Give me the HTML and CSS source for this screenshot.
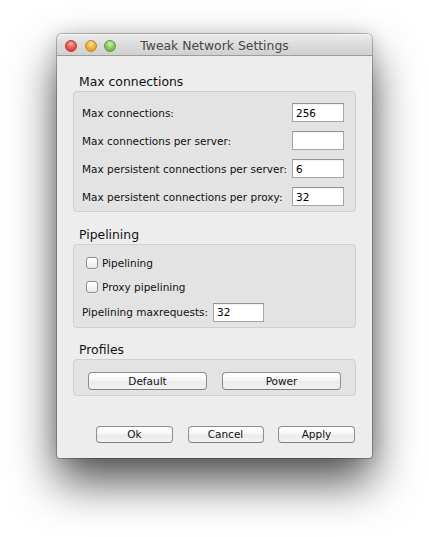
FILE: index.html
```html
<!DOCTYPE html>
<html>
<head>
<meta charset="utf-8">
<title>Tweak Network Settings</title>
<link rel="stylesheet" href="styles.css">
</head>
<body>
<div class="window">
  <div class="titlebar">
    <div class="lights">
      <span class="light red"></span>
      <span class="light yellow"></span>
      <span class="light green"></span>
    </div>
    <div class="title">Tweak Network Settings</div>
    <div class="spacer"></div>
  </div>
  <div class="content">
    <section class="section">
      <h2 class="heading">Max connections</h2>
      <div class="group form-grid">
        <span class="label">Max connections:</span>
        <input class="field" type="text" value="256">
        <span class="label">Max connections per server:</span>
        <input class="field" type="text" value="">
        <span class="label">Max persistent connections per server:</span>
        <input class="field" type="text" value="6">
        <span class="label">Max persistent connections per proxy:</span>
        <input class="field" type="text" value="32">
      </div>
    </section>
    <section class="section">
      <h2 class="heading">Pipelining</h2>
      <div class="group stack">
        <label class="check-row"><input class="checkbox" type="checkbox"><span class="label">Pipelining</span></label>
        <label class="check-row"><input class="checkbox" type="checkbox"><span class="label">Proxy pipelining</span></label>
        <div class="inline-row">
          <span class="label">Pipelining maxrequests:</span>
          <input class="field field-narrow" type="text" value="32">
        </div>
      </div>
    </section>
    <section class="section">
      <h2 class="heading">Profiles</h2>
      <div class="group profile-row">
        <button class="btn btn-profile">Default</button>
        <button class="btn btn-profile">Power</button>
      </div>
    </section>
    <div class="footer">
      <button class="btn btn-footer">Ok</button>
      <button class="btn btn-footer btn-cancel">Cancel</button>
      <button class="btn btn-footer">Apply</button>
    </div>
  </div>
</div>
</body>
</html>
```

FILE: styles.css
```css
html, body {
  margin: 0;
  background: #ffffff;
}

body {
  font-family: "DejaVu Sans", sans-serif;
  padding: 34px 0 0 57px;
  height: 537px;
  box-sizing: border-box;
  overflow: hidden;
}

.window {
  width: 315px;
  height: 424px;
  background: #ededed;
  border-radius: 5px 5px 3px 3px;
  box-shadow: 0 0 0 1px rgba(0, 0, 0, 0.24), 0 24px 46px rgba(0, 0, 0, 0.68), 0 0 18px rgba(0, 0, 0, 0.14);
  display: flex;
  flex-direction: column;
  overflow: hidden;
}

.titlebar {
  height: 21px;
  border-bottom: 1px solid #9c9c9c;
  background: linear-gradient(#ececec, #dcdcdc 50%, #d0d0d0);
  box-shadow: inset 0 1px 0 #f6f6f6;
  display: grid;
  grid-template-columns: 1fr auto 1fr;
}

.lights {
  display: flex;
  gap: 7.5px;
  padding: 6px 0 0 8px;
}

.light {
  width: 12px;
  height: 12px;
  border-radius: 50%;
  box-sizing: border-box;
}

.red {
  background: radial-gradient(circle at 50% 30%, #fbb3ae 0%, #ec5b55 45%, #d2302a 100%);
  border: 1px solid #b03a34;
}

.yellow {
  background: radial-gradient(circle at 50% 30%, #fde3a0 0%, #f0b53e 45%, #d69320 100%);
  border: 1px solid #b78a2e;
}

.green {
  background: radial-gradient(circle at 50% 30%, #d3f0b6 0%, #8fce62 45%, #5ea739 100%);
  border: 1px solid #5d9a41;
}

.title {
  font-size: 12.4px;
  line-height: 18px;
  padding-top: 3px;
  color: #474747;
  white-space: nowrap;
}

.content {
  flex: 1;
  display: flex;
  flex-direction: column;
  padding: 18px 16px 15px;
}

.section + .section {
  margin-top: 14.5px;
}

.heading {
  margin: 0 0 2px 6px;
  font-size: 12.4px;
  font-weight: normal;
  line-height: 15px;
  color: #111111;
}

.group {
  background: #e3e3e3;
  border: 1px solid #d0d0d0;
  border-radius: 4px;
}

.form-grid {
  display: grid;
  grid-template-columns: 1fr 52px;
  row-gap: 9px;
  align-items: center;
  padding: 11px 11px 5px 8px;
}

.label {
  font-size: 10.5px;
  color: #111111;
  white-space: nowrap;
}

.field {
  width: 52px;
  height: 19px;
  box-sizing: border-box;
  margin: 0;
  padding: 0 3px;
  border: 1px solid #a6a6a6;
  border-top-color: #929292;
  border-radius: 0;
  background: #ffffff;
  box-shadow: inset 0 1px 1px rgba(0, 0, 0, 0.06);
  font-family: "DejaVu Sans", sans-serif;
  font-size: 10.5px;
  color: #000;
  outline: none;
}

.field-narrow {
  width: 51px;
}

.stack {
  display: flex;
  flex-direction: column;
  gap: 8px;
  padding: 10px 8px 5px;
}

.check-row {
  display: flex;
  align-items: center;
  gap: 4px;
  height: 16px;
  margin-left: 4px;
}

.checkbox {
  appearance: none;
  -webkit-appearance: none;
  width: 12px;
  height: 12px;
  margin: 0;
  box-sizing: border-box;
  border: 1px solid #8c8c8c;
  border-radius: 3px;
  background: linear-gradient(#ffffff, #f2f2f2 60%, #e9e9e9);
  box-shadow: 0 0.5px 0 rgba(255, 255, 255, 0.6);
}

.inline-row {
  display: flex;
  align-items: center;
  gap: 5px;
}

.profile-row {
  display: flex;
  gap: 15px;
  padding: 12px 14px 5px;
}

.btn {
  box-sizing: border-box;
  margin: 0;
  padding: 0;
  border: 1px solid #8e8e8e;
  border-bottom-color: #7e7e7e;
  border-radius: 4px;
  background: linear-gradient(#ffffff, #f6f6f6 45%, #ebebeb 55%, #f3f3f3);
  font-family: "DejaVu Sans", sans-serif;
  font-size: 10.5px;
  color: #111111;
  line-height: 1;
}

.btn-profile {
  flex: 1;
  height: 18px;
}

.footer {
  margin-top: auto;
  display: flex;
  justify-content: flex-end;
  gap: 14.5px;
  padding-right: 1px;
}

.btn-footer {
  width: 77px;
  height: 17px;
}

.btn-cancel {
  width: 76px;
}
```
